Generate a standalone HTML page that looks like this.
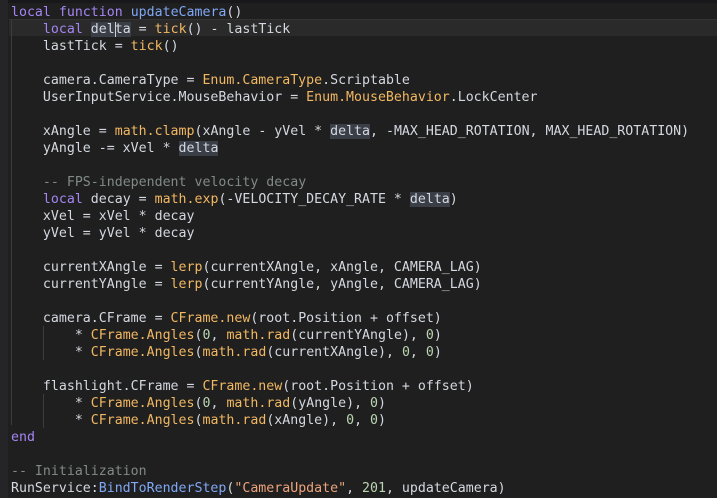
<!DOCTYPE html>
<html><head><meta charset="utf-8"><style>
html,body{margin:0;padding:0}
body{width:717px;height:498px;background:#1f1f1f;overflow:hidden;position:relative;font-family:"DejaVu Sans Mono","Liberation Mono",monospace;font-size:13.25px;color:#d4d8e0}
.top{position:absolute;left:0;top:0;width:717px;height:3px;background:#18181a}
.gut{position:absolute;left:0;top:0;width:8px;height:498px;background:#252528}
.cur{position:absolute;left:9px;top:19px;width:708px;height:16px;background:#2a2a2a;border-top:1px solid #333;}
.guide{position:absolute;width:1px;background:#3c3c3c}
pre{position:absolute;left:11px;top:4px;margin:0;font:inherit;line-height:17px;white-space:pre}
.k{color:#a585f4}.f{color:#80a8f6}.o{color:#f2b862}.n{color:#bad6b2}.c{color:#808a86}.s{color:#eca47c}
.hl{background:#3a3e46}
.caret{display:inline-block;width:1px;height:15px;background:#d0d0d0;vertical-align:-4px;margin-right:-1px}
</style></head><body>
<div class="top"></div><div class="gut"></div><div class="cur"></div>
<div class="guide" style="left:11px;top:20px;height:405px"></div>
<div class="guide" style="left:43px;top:326px;height:34px"></div>
<div class="guide" style="left:43px;top:394px;height:34px"></div>
<pre><span class="k">local</span> <span class="k">function</span> <span class="f">updateCamera</span>()
    <span class="k">local</span> <span class="hl">del<span class="caret"></span>ta</span> = <span class="o">tick</span>() - lastTick
    lastTick = <span class="o">tick</span>()

    camera.CameraType = <span class="o">Enum.CameraType</span>.Scriptable
    UserInputService.MouseBehavior = <span class="o">Enum.MouseBehavior</span>.LockCenter

    xAngle = <span class="o">math.clamp</span>(xAngle - yVel * <span class="hl">delta</span>, -MAX_HEAD_ROTATION, MAX_HEAD_ROTATION)
    yAngle -= xVel * <span class="hl">delta</span>

    <span class="c">-- FPS-independent velocity decay</span>
    <span class="k">local</span> decay = <span class="o">math.exp</span>(-VELOCITY_DECAY_RATE * <span class="hl">delta</span>)
    xVel = xVel * decay
    yVel = yVel * decay

    currentXAngle = <span class="o">lerp</span>(currentXAngle, xAngle, CAMERA_LAG)
    currentYAngle = <span class="o">lerp</span>(currentYAngle, yAngle, CAMERA_LAG)

    camera.CFrame = <span class="o">CFrame.new</span>(root.Position + offset)
        * <span class="o">CFrame.Angles</span>(<span class="n">0</span>, <span class="o">math.rad</span>(currentYAngle), <span class="n">0</span>)
        * <span class="o">CFrame.Angles</span>(<span class="o">math.rad</span>(currentXAngle), <span class="n">0</span>, <span class="n">0</span>)

    flashlight.CFrame = <span class="o">CFrame.new</span>(root.Position + offset)
        * <span class="o">CFrame.Angles</span>(<span class="n">0</span>, <span class="o">math.rad</span>(yAngle), <span class="n">0</span>)
        * <span class="o">CFrame.Angles</span>(<span class="o">math.rad</span>(xAngle), <span class="n">0</span>, <span class="n">0</span>)
<span class="k">end</span>

<span class="c">-- Initialization</span>
RunService:<span class="f">BindToRenderStep</span>(<span class="s">"CameraUpdate"</span>, <span class="n">201</span>, updateCamera)</pre>
</body></html>
